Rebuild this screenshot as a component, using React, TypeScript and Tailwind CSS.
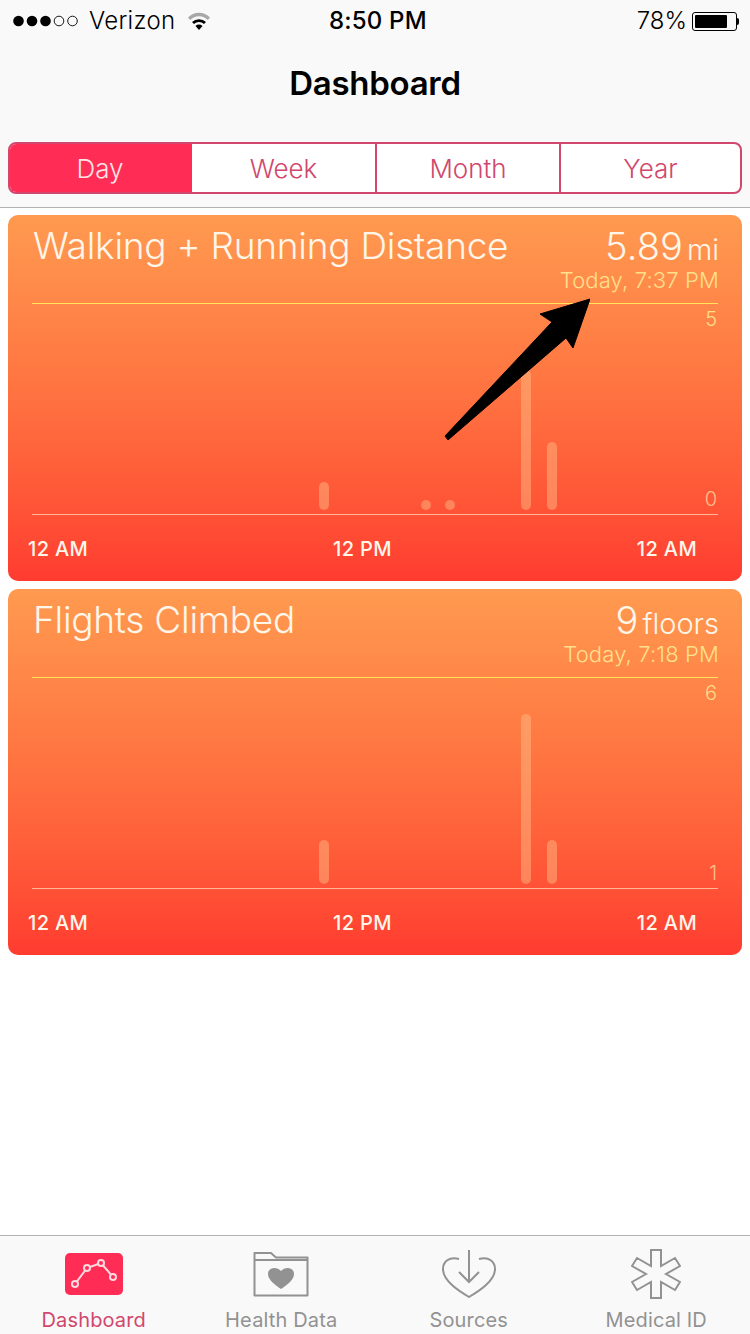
import React from "react";

const font = { fontFamily: "Inter, 'Liberation Sans', sans-serif" };

type Bar = { x: number; y: number; h: number };

function Card({ title, value, unit, time, top, bottom, bars, dots }: { title: string; value: string; unit: string; time: string; top: string; bottom: string; bars: Bar[]; dots?: number[] }) {
  return (
    <div className="relative h-[366px] rounded-[10px] bg-gradient-to-b from-[#ff9a50] to-[#ff3b30] flex flex-col">
      <div className="h-[88px] pl-[25px] pr-[23px] flex justify-between shrink-0">
        <div className="text-[37px] leading-[44px] pt-[9px] text-[#fff6ea] font-light tracking-[-0.25px]">{title}</div>
        <div className="flex flex-col items-end pt-[9px]">
          <div className="flex items-baseline text-[#fff6ea] font-light leading-[44px]">
            <span className="text-[38px] tracking-[0.1px]">{value}</span>
            <span className="text-[29px] ml-[4px]">{unit}</span>
          </div>
          <div className="text-[22px] leading-[26px] -mt-[5px] text-[#ffe08c] font-light tracking-[0.15px]">{time}</div>
        </div>
      </div>
      <div className="relative mx-[24px] h-[212px] border-y border-t-[#ffe45c] border-b-[#ffb89a] shrink-0">
        <svg width="687" height="210" viewBox="0 0 687 210" className="block">
          {bars.map((b, i) => (
            <rect key={i} x={b.x} y={b.y} width="10" height={b.h} rx="5" fill="#ffc08a" fillOpacity="0.45" />
          ))}
          {dots?.map((x, i) => (
            <circle key={i} cx={x} cy="201" r="5" fill="#ffc08a" fillOpacity="0.45" />
          ))}
        </svg>
        <span className="absolute right-[1px] top-[3px] text-[20px] leading-[24px] text-[#ffdc8c] font-light">{top}</span>
        <span className="absolute right-[1px] bottom-[3px] text-[20px] leading-[24px] text-[#ffc08a] font-light">{bottom}</span>
      </div>
      <div className="flex justify-between pl-[20px] pr-[45px] pt-[22px] text-[20px] leading-[24px] text-[#fff6ea] font-medium tracking-[0.35px]">
        <span>12 AM</span>
        <span>12 PM</span>
        <span>12 AM</span>
      </div>
    </div>
  );
}

function Tab({ label, active, children }: { label: string; active?: boolean; children: React.ReactNode }) {
  return (
    <div className="w-[187.5px] flex flex-col items-center pt-[7px]">
      <div className="h-[62px] flex items-center justify-center">{children}</div>
      <div className={`text-[20px] leading-[24px] mt-[3px] tracking-[0.15px] ${active ? "text-[#d1476d]" : "text-[#929292]"}`}>{label}</div>
    </div>
  );
}

export default function App() {
  return (
    <div style={font} className="relative w-[750px] h-[1334px] bg-white flex flex-col overflow-hidden">
      <div className="h-[208px] bg-[#f9f9f9] border-b border-[#b2b2b2] shrink-0 flex flex-col">
        <div className="relative h-[42px] flex items-center justify-between pl-[13px] pr-[11px] text-black">
          <div className="flex items-center">
            <svg width="67" height="14" viewBox="0 0 67 14">
              {[0, 1, 2].map((i) => <circle key={i} cx={5.5 + i * 13.5} cy="7" r="5.3" fill="#000" />)}
              {[3, 4].map((i) => <circle key={i} cx={5.5 + i * 13.5} cy="7" r="4.8" fill="none" stroke="#000" strokeWidth="0.9" />)}
            </svg>
            <span className="ml-[9px] text-[24px] leading-[28px] font-light tracking-[0.3px]">Verizon</span>
            <svg width="24" height="20" viewBox="0 0 24 20" className="ml-[12px]">
              <path d="M1 6.5 A15 15 0 0 1 23 6.5 L20.8 9 A12 12 0 0 0 3.2 9 Z" fill="#a8a8a8" />
              <path d="M5 11 A10 10 0 0 1 19 11 L17 13 A7.5 7.5 0 0 0 7 13 Z" fill="#000" />
              <path d="M8.5 15 A5 5 0 0 1 15.5 15 L12 19 Z" fill="#000" />
            </svg>
          </div>
          <span className="absolute left-[329px] top-[7px] text-[24px] leading-[28px] font-medium tracking-[0.2px]">8:50 PM</span>
          <div className="flex items-center">
            <span className="text-[24px] leading-[28px] font-light">78%</span>
            <div className="ml-[5px] w-[45px] h-[19px] border border-black rounded-[3px] p-[2px] flex">
              <div className="w-[32px] bg-black rounded-[1px]" />
            </div>
            <div className="w-[2px] h-[7px] bg-black rounded-r-[2px]" />
          </div>
        </div>
        <div className="h-[84px] flex items-center justify-center text-[33px] font-semibold text-black tracking-[-0.3px]">Dashboard</div>
        <div className="mx-[8px] h-[52px] mt-[16px] flex rounded-[8px] border-2 border-[#d1476d] bg-white overflow-hidden text-[26px] font-light">
          <div className="w-[184px] -my-[2px] -ml-[2px] bg-[#ff2d55] text-[#ffe4e6] flex items-center justify-center">Day</div>
          <div className="w-[183px] text-[#d1476d] flex items-center justify-center">Week</div>
          <div className="w-[184px] border-l-2 border-[#d1476d] text-[#d1476d] flex items-center justify-center">Month</div>
          <div className="flex-1 border-l-2 border-[#d1476d] text-[#d1476d] flex items-center justify-center">Year</div>
        </div>
      </div>

      <div className="flex-1 px-[8px] pt-[7px] flex flex-col gap-[8px]">
        <Card
          title="Walking + Running Distance"
          value="5.89"
          unit="mi"
          time="Today, 7:37 PM"
          top="5"
          bottom="0"
          bars={[
            { x: 287, y: 178, h: 28 },
            { x: 489, y: 66, h: 140 },
            { x: 515, y: 138, h: 68 },
          ]}
          dots={[394, 418]}
        />
        <Card
          title="Flights Climbed"
          value="9"
          unit="floors"
          time="Today, 7:18 PM"
          top="6"
          bottom="1"
          bars={[
            { x: 287, y: 162, h: 44 },
            { x: 489, y: 36, h: 170 },
            { x: 515, y: 162, h: 44 },
          ]}
        />
      </div>

      <div className="h-[99px] bg-[#f9f9f9] border-t border-[#b2b2b2] flex shrink-0">
        <Tab label="Dashboard" active>
          <svg width="58" height="42" viewBox="0 0 58 42">
            <rect width="58" height="42" rx="5" fill="#ff2d55" />
            <path d="M10 31 L22 15 L36 10 L48 24" fill="none" stroke="#ffd9df" strokeWidth="2" />
            {[[10, 31], [22, 15], [36, 10], [48, 24]].map(([x, y], i) => (
              <circle key={i} cx={x} cy={y} r="3" fill="#ff2d55" stroke="#ffd9df" strokeWidth="2" />
            ))}
          </svg>
        </Tab>
        <Tab label="Health Data">
          <svg width="56" height="46" viewBox="0 0 56 46">
            <path d="M1.5 44.5 V2 H18 L23 6.5 H54.5 V44.5 Z M1.5 9 H54.5" fill="none" stroke="#929292" strokeWidth="2" strokeLinejoin="round" />
            <path d="M28 38 C22 34 15 29 15 23 C15 16 24 15 28 20 C32 15 41 16 41 23 C41 29 34 34 28 38 Z" fill="#929292" />
          </svg>
        </Tab>
        <Tab label="Sources">
          <svg width="56" height="50" viewBox="0 0 56 50">
            <path d="M18 10 C8 7 2 13 2 20 C2 32 18 42 28 48 C38 42 54 32 54 20 C54 13 48 7 38 10" fill="none" stroke="#929292" strokeWidth="2" />
            <path d="M28 1 V33 M18 23 L28 33 L38 23" fill="none" stroke="#929292" strokeWidth="2" />
          </svg>
        </Tab>
        <Tab label="Medical ID">
          <svg width="50" height="50" viewBox="0 0 50 50">
            <path d="M20 1 H30 V17 L44 9 L49 17 L35 25 L49 33 L44 41 L30 33 V49 H20 V33 L6 41 L1 33 L15 25 L1 17 L6 9 L20 17 Z" fill="none" stroke="#929292" strokeWidth="2" />
          </svg>
        </Tab>
      </div>

      <svg width="150" height="150" viewBox="440 295 150 150" className="absolute left-[440px] top-[295px]">
        <path d="M590 299 L540 314 L552 322 L445 436 L448 440 L566 338 L573 348 Z" fill="#000" stroke="#000" strokeLinejoin="round" />
      </svg>
    </div>
  );
}
